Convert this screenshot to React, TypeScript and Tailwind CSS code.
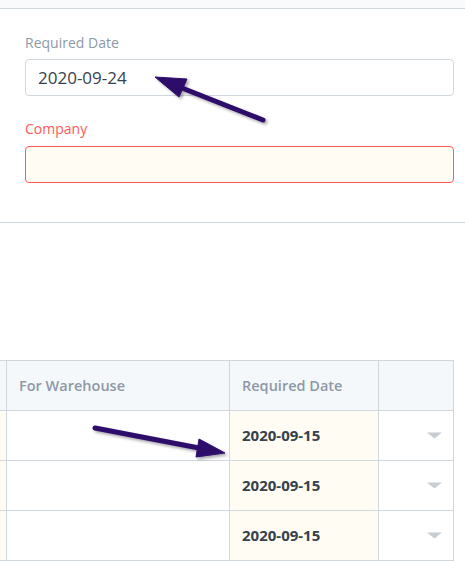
import React from 'react';

const rows = ['2020-09-15', '2020-09-15', '2020-09-15'];

function Arrows() {
  return (
    <svg className="absolute inset-0 pointer-events-none" width={465} height={563} viewBox="0 0 465 563">
      <defs>
        <filter id="sh" x="-20%" y="-20%" width="140%" height="140%">
          <feDropShadow dx="2" dy="2" stdDeviation="1.5" floodColor="#000" floodOpacity="0.35" />
        </filter>
      </defs>
      <g fill="#2d0a6b" stroke="#2d0a6b" filter="url(#sh)">
        <line x1={263} y1={120} x2={182} y2={88} strokeWidth={5} strokeLinecap="round" />
        <polygon points="155,77 187,79 179,97" strokeWidth={1} strokeLinejoin="round" />
        <line x1={95} y1={428} x2={199} y2={448} strokeWidth={5} strokeLinecap="round" />
        <polygon points="225,453 199,439 196,457" strokeWidth={1} strokeLinejoin="round" />
      </g>
    </svg>
  );
}

export default function App() {
  return (
    <div className="relative w-[465px] h-[563px] bg-white overflow-hidden font-['Open_Sans',sans-serif]">
      <div className="h-[9px] bg-[#f9fafb] border-b border-[#d1d8dd]" />

      <div className="pl-[25px] pr-[11px] pt-[25px] pb-[39px] border-b border-[#d1d8dd]">
        <div className="text-[14px] leading-[18px] text-[#8d99a6]">Required Date</div>
        <div className="mt-[7px] h-[37px] rounded border border-[#d1d8dd] bg-white pl-3 flex items-center text-[17px] text-[#36414c]">
          2020-09-24
        </div>
        <div className="mt-[24px] text-[14px] leading-[18px] text-[#ff5858]">Company</div>
        <div className="mt-[8px] h-[37px] rounded border border-[#ff5858] bg-[#fffcf4]" />
      </div>

      <div className="mt-[137px] w-[454px] border-t border-r border-[#d1d8dd]">
        <div className="flex h-[50px] border-b border-[#d1d8dd] bg-[#f5f8fb]">
          <div className="w-[7px] border-r border-[#d1d8dd]" />
          <div className="w-[223px] border-r border-[#d1d8dd] pl-3 flex items-center text-[14.5px] font-semibold text-[#8d99a6]">
            For Warehouse
          </div>
          <div className="w-[149px] border-r border-[#d1d8dd] pl-3 flex items-center text-[14.5px] font-semibold text-[#8d99a6]">
            Required Date
          </div>
          <div className="flex-1" />
        </div>
        {rows.map((d, i) => (
          <div key={i} className="flex h-[50px] border-b border-[#d1d8dd]">
            <div className="w-[7px] border-r border-[#d1d8dd] bg-[#fffcf4]" />
            <div className="w-[223px] border-r border-[#d1d8dd]" />
            <div className="w-[149px] border-r border-[#d1d8dd] bg-[#fffcf4] pl-3 flex items-center text-[15px] font-bold text-[#36414c]">
              {d}
            </div>
            <div className="flex-1 flex items-center justify-end pr-[11px]">
              <svg width="15" height="7" viewBox="0 0 15 7">
                <polygon points="0,0.5 15,0.5 7.5,6.5" fill="#c8cdd2" />
              </svg>
            </div>
          </div>
        ))}
      </div>

      <Arrows />
    </div>
  );
}
